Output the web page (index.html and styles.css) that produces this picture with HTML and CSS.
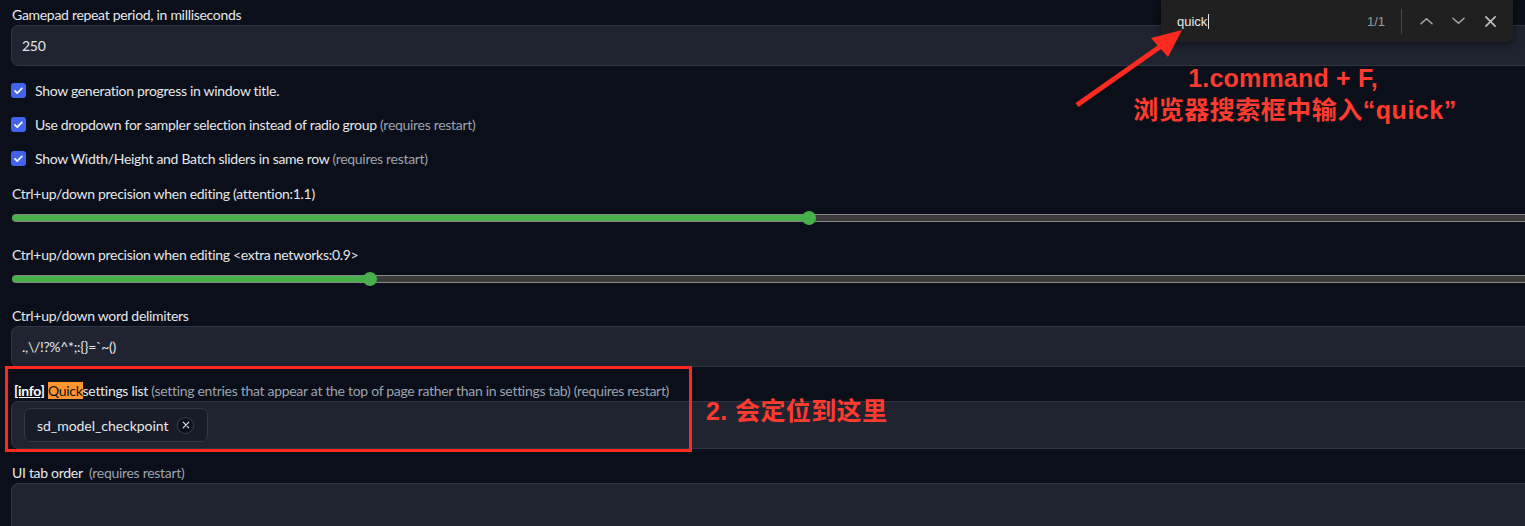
FILE: index.html
```html
<!DOCTYPE html>
<html lang="zh">
<head>
<meta charset="utf-8">
<title>Settings</title>
<link rel="stylesheet" href="styles.css">
</head>
<body>
<div class="page">
  <div class="field">
    <div class="label">Gamepad repeat period, in milliseconds</div>
    <div class="input">250</div>
  </div>

  <div class="checks">
    <div class="check">
      <span class="box"><svg viewBox="0 0 16 16" width="15" height="15"><path d="M4.2 8.3l2.4 2.4 5-5" fill="none" stroke="#fff" stroke-width="1.8" stroke-linecap="round" stroke-linejoin="round"/></svg></span>
      <span class="ctext">Show generation progress in window title.</span>
    </div>
    <div class="check">
      <span class="box"><svg viewBox="0 0 16 16" width="15" height="15"><path d="M4.2 8.3l2.4 2.4 5-5" fill="none" stroke="#fff" stroke-width="1.8" stroke-linecap="round" stroke-linejoin="round"/></svg></span>
      <span class="ctext">Use dropdown for sampler selection instead of radio group <span class="muted">(requires restart)</span></span>
    </div>
    <div class="check">
      <span class="box"><svg viewBox="0 0 16 16" width="15" height="15"><path d="M4.2 8.3l2.4 2.4 5-5" fill="none" stroke="#fff" stroke-width="1.8" stroke-linecap="round" stroke-linejoin="round"/></svg></span>
      <span class="ctext">Show Width/Height and Batch sliders in same row <span class="muted">(requires restart)</span></span>
    </div>
  </div>

  <div class="field slider-field">
    <div class="label">Ctrl+up/down precision when editing (attention:1.1)</div>
    <div class="slider" style="--v:797px">
      <div class="track"><div class="fill"></div></div>
      <div class="thumb"></div>
    </div>
  </div>

  <div class="field slider-field">
    <div class="label">Ctrl+up/down precision when editing &lt;extra networks:0.9&gt;</div>
    <div class="slider" style="--v:358px">
      <div class="track"><div class="fill"></div></div>
      <div class="thumb"></div>
    </div>
  </div>

  <div class="field">
    <div class="label">Ctrl+up/down word delimiters</div>
    <div class="input">.,\/!?%^*;:{}=`~()</div>
  </div>

  <div class="field">
    <div class="label info-label"><a class="info">[info]</a> <mark class="hl">Quick</mark>settings list <span class="muted">(setting entries that appear at the top of page rather than in settings tab) (requires restart)</span></div>
    <div class="input tags">
      <span class="chip">sd_model_checkpoint<span class="chip-x"><svg viewBox="0 0 10 10" width="8" height="8"><path d="M1.5 1.5l7 7M8.5 1.5l-7 7" stroke="#e5e7eb" stroke-width="1.4" stroke-linecap="round"/></svg></span></span>
    </div>
  </div>

  <div class="field">
    <div class="label">UI tab order&nbsp; <span class="muted">(requires restart)</span></div>
    <div class="input tall"></div>
  </div>
</div>

<div class="findbar">
  <div class="find-query">quick<span class="caret"></span></div>
  <div class="find-count">1/1</div>
  <div class="find-sep"></div>
  <div class="find-btn"><svg viewBox="0 0 14 8" width="13" height="8"><path d="M1 7l6-5.5L13 7" fill="none" stroke="#a8a8a8" stroke-width="1.6" stroke-linecap="round" stroke-linejoin="round"/></svg></div>
  <div class="find-btn"><svg viewBox="0 0 14 8" width="13" height="8"><path d="M1 1l6 5.5L13 1" fill="none" stroke="#a8a8a8" stroke-width="1.6" stroke-linecap="round" stroke-linejoin="round"/></svg></div>
  <div class="find-btn"><svg viewBox="0 0 12 12" width="11" height="11"><path d="M1 1l10 10M11 1L1 11" fill="none" stroke="#c0c0c0" stroke-width="1.8" stroke-linecap="round"/></svg></div>
</div>

<div class="redbox"></div>
<svg class="arrow" width="1525" height="526" viewBox="0 0 1525 526">
  <line x1="1077" y1="105" x2="1164" y2="44" stroke="#ff2a1f" stroke-width="5"/>
  <polygon points="1182,30 1151,38 1168,57" fill="#ff2a1f"/>
</svg>
<div class="note1"><span class="l1">1.command + F,</span><span class="l2">浏览器搜索框中输入“quick”</span></div>
<div class="note2">2. 会定位到这里</div>
</body>
</html>
```

FILE: styles.css
```css
* { box-sizing: border-box; }
html, body { margin: 0; padding: 0; }
body {
  background: #0b0f19;
  color: #e5e7eb;
  font-family: Lato, "Noto Sans", sans-serif;
  font-size: 14px;
  width: 1525px;
  height: 526px;
  overflow: hidden;
  position: relative;
}
.page {
  width: 1560px;
  height: 526px;
  overflow: hidden;
  padding: 5px 0 0 11px;
  display: flex;
  flex-direction: column;
  letter-spacing: -0.3px;
}
.field { display: flex; flex-direction: column; margin-bottom: 14px; flex-shrink: 0; }
.slider-field { margin-bottom: 20px; }
.label { line-height: 20px; height: 20px; padding-left: 1px; white-space: nowrap; }
.muted { color: #9ca3af; }
.input {
  height: 41px;
  background: #1f2430;
  border: 1px solid #2e3441;
  border-radius: 7px;
  padding: 0 10px;
  display: flex;
  align-items: center;
}
.input.tags { height: 48px; padding: 0 12px; }
.input.tall { height: 60px; }

.checks { display: flex; flex-direction: column; gap: 14px; margin-bottom: 16px; flex-shrink: 0; }
.check { display: flex; align-items: center; height: 20px; gap: 9px; }
.box {
  width: 15px; height: 15px;
  border-radius: 3px;
  background: #4263eb;
  display: flex;
  align-items: center;
  justify-content: center;
}
.box svg { display: block; }

.slider {
  position: relative;
  height: 14px;
  margin-top: 7px;
  display: flex;
  align-items: center;
  padding-left: 1px;
}
.track {
  position: relative;
  flex: 1;
  height: 8px;
  background: #3b3b3b;
  border-top: 1px solid #868686;
  border-bottom: 1px solid #868686;
  border-radius: 4px 0 0 4px;
}
.fill {
  position: absolute;
  left: 0; top: 0;
  height: 6px;
  width: var(--v);
  background: #48b04a;
  border-radius: 3px 0 0 3px;
}
.thumb {
  position: absolute;
  top: 0;
  left: calc(var(--v) - 6px);
  width: 14px; height: 14px;
  border-radius: 50%;
  background: #48b04a;
}

.info-label { padding-left: 3px; }
.info { color: #ffffff; font-weight: 700; text-decoration: underline; }
.hl { background: #ff9632; color: #111; padding: 0; }

.chip {
  display: flex;
  align-items: center;
  height: 34px;
  padding: 0 13px 0 12px;
  background: #171c27;
  border: 1px solid #323846;
  border-radius: 7px;
  gap: 9px;
  letter-spacing: -0.05px;
}
.chip-x {
  width: 17px; height: 17px;
  border-radius: 50%;
  background: #0b0f19;
  border: 1px solid #3a404d;
  display: flex; align-items: center; justify-content: center;
}
.chip-x svg { display: block; }

.findbar {
  position: absolute;
  left: 1161px; top: 0;
  width: 352px; height: 42px;
  background: #202020;
  border-radius: 0 0 6px 6px;
  box-shadow: 0 2px 10px rgba(0,0,0,0.55);
  display: flex;
  align-items: center;
  padding: 0 7px 0 16px;
  font-family: "Liberation Sans", Arial, sans-serif;
  font-size: 13px;
  color: #e8e8e8;
}
.find-query { flex: 1; display: flex; align-items: center; }
.caret { display: inline-block; width: 1px; height: 15px; background: #e8e8e8; margin-left: 1px; }
.find-count { color: #9a9a9a; margin-right: 16px; }
.find-sep { width: 1px; height: 25px; background: #454545; margin-right: 8px; }
.find-btn { width: 32px; display: flex; justify-content: center; align-items: center; }
.find-btn svg { display: block; }

.redbox {
  position: absolute;
  left: 5px; top: 366px;
  width: 687px; height: 86px;
  border: 3px solid #ff2a1f;
}
.arrow { position: absolute; left: 0; top: 0; pointer-events: none; }
.note1, .note2 {
  position: absolute;
  color: #ff3a2f;
  font-family: "Liberation Sans", "Noto Sans CJK SC", sans-serif;
  font-weight: 700;
  font-size: 25px;
  white-space: nowrap;
}
.note1 {
  left: 1100px; top: 62px; width: 390px;
  display: flex; flex-direction: column; align-items: center;
  line-height: 32px;
}
.note1 .l1 { padding-right: 24px; letter-spacing: 0.2px; }
.note1 .l2 { letter-spacing: 0.5px; }
.note2 { left: 706px; top: 396px; line-height: 30px; letter-spacing: 0.4px; }
```
